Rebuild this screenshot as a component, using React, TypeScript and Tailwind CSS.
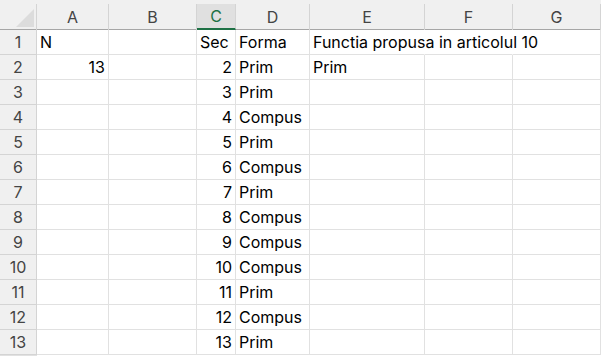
import React from "react";

const cols = ["A", "B", "C", "D", "E", "F", "G"];

// values per row: [A, B, C, D, E]
const rows: (string | number)[][] = [
  ["N", "", "Sec", "Forma", "Functia propusa in articolul 10"],
  [13, "", 2, "Prim", "Prim"],
  ["", "", 3, "Prim", ""],
  ["", "", 4, "Compus", ""],
  ["", "", 5, "Prim", ""],
  ["", "", 6, "Compus", ""],
  ["", "", 7, "Prim", ""],
  ["", "", 8, "Compus", ""],
  ["", "", 9, "Compus", ""],
  ["", "", 10, "Compus", ""],
  ["", "", 11, "Prim", ""],
  ["", "", 12, "Compus", ""],
  ["", "", 13, "Prim", ""],
];

const grid =
  "grid grid-cols-[37px_72px_88px_39px_74px_115px_88px_1fr]";

export default function App() {
  return (
    <div
      className="w-[601px] h-[362px] overflow-hidden bg-white text-black"
      style={{ fontFamily: "Inter, 'Noto Sans', sans-serif" }}
    >
      {/* column headers */}
      <div className={`${grid} h-[30px] bg-[#f0f0f0] border-b border-[#a6a6a6]`}>
        <div className="relative pt-[4px]">
          <div className="h-full border-r border-[#d4d4d4]" />
          <div className="absolute right-[3px] bottom-[3px] w-0 h-0 border-l-[18px] border-l-transparent border-b-[18px] border-b-[#dcdcdc]" />
        </div>
        {cols.map((c) => (
          <div key={c} className="pt-[4px]">
            {c === "C" ? (
              <div className="h-full flex items-center justify-center bg-[#e0e0e0] border-r border-[#d4d4d4] border-b-2 border-b-[#1e7145] text-[16px] text-[#1e7145]">
                {c}
              </div>
            ) : (
              <div className="h-full flex items-center justify-center border-r border-[#d4d4d4] text-[16px] text-[#444]">
                {c}
              </div>
            )}
          </div>
        ))}
        <div />
      </div>

      {/* rows */}
      {rows.map((r, i) => (
        <div key={i} className={`${grid} h-[25px]`}>
          <div className="flex items-center justify-center bg-[#f0f0f0] border-r border-b border-[#d4d4d4] text-[16px] text-[#444]">
            {i + 1}
          </div>
          {[0, 1, 2, 3, 4, 5, 6].map((j) => {
            const v = r[j] ?? "";
            const isNum = typeof v === "number";
            const spill = i === 0 && (j === 4 || j === 5);
            return (
              <div
                key={j}
                className={`flex items-center border-b border-[#e1e1e1] text-[16px] whitespace-nowrap ${
                  spill ? "border-r border-r-transparent overflow-visible relative z-10" : "border-r overflow-hidden"
                } ${isNum ? "justify-end pr-[3px]" : "justify-start pl-[3px]"}`}
              >
                {v}
              </div>
            );
          })}
          <div className="border-b border-[#e1e1e1]" />
        </div>
      ))}
    </div>
  );
}
